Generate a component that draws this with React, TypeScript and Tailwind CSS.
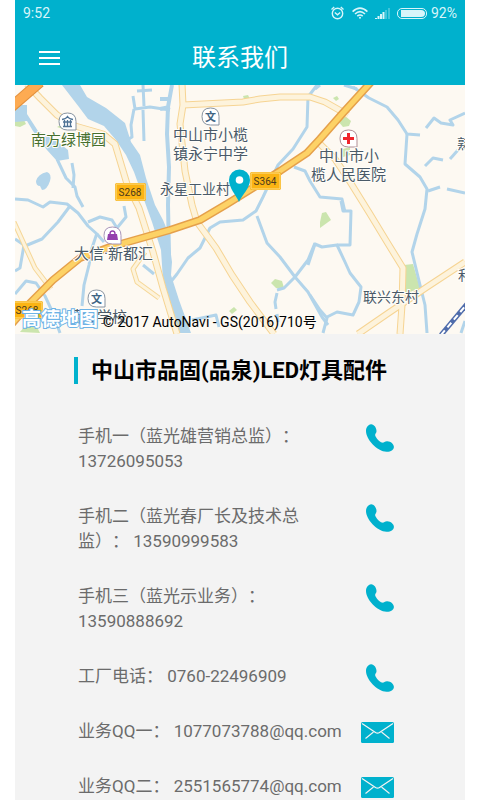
const contacts = [
  { label: "手机一（蓝光雄营销总监）：", value: "13726095053", type: "phone" },
  { label: "手机二（蓝光春厂长及技术总监）：", value: "13590999583", type: "phone" },
  { label: "手机三（蓝光示业务）：", value: "13590888692", type: "phone" },
  { label: "工厂电话：", value: "0760-22496909", type: "phone" },
  { label: "业务QQ一：", value: "1077073788@qq.com", type: "mail" },
  { label: "业务QQ二：", value: "2551565774@qq.com", type: "mail" },
]

const streams = [
  "M57 159 L66 178 L75 187 L77 196 L83 207",
  "M72 163 L74 175 L73 188",
  "M15 199 L28 200 L43 207 L50 202 L67 204 L78 213 L88 226 L97 234 L104 242",
  "M97 233 L92 248 L89 265 L84 285 L82 306",
  "M88 222 L100 217 L112 220 L117 228 L126 217 L124 206",
  "M15 239 L24 245 L20 268 L15 271",
  "M25 246 L42 239 L58 222 L70 206",
  "M15 294 L26 281 L36 283 L45 296 L52 311 L60 333",
  "M133 96 L135 109 L150 107 L170 110",
  "M134 109 L131 125 L132 137 L124 142",
  "M143 110 L144 141",
  "M143 85 L144 106 M137 91 L152 90",
  "M317 85 L308 97 L307 127 L293 149 L278 165 L263 197 L256 211 L243 220 L220 222 L210 228 L200 248 L188 258 L177 274 L169 284",
  "M257 216 L267 243 L280 257 L295 277 L308 292 L322 317 L328 325",
  "M315 243 L308 260 L295 277 L284 288 L277 290",
  "M277 293 L275 302 L276 309 M277 314 L278 322",
  "M310 295 L320 310 L327 318 L323 333",
  "M327 317 L337 312 L353 315 L359 302 L361 287 L350 273 L345 262 L337 245 L322 247 L315 244 L308 265",
  "M337 245 L350 245 L351 211 L343 211 L341 201",
  "M345 212 L342 199 L320 197 L310 181 L305 171 L294 167",
  "M353 87 L369 98 L387 107 L398 120 L407 134 L420 135",
  "M407 134 L405 164 L420 177 L427 189 L425 209 L417 234 L412 252 L420 285 L425 305 L427 333",
  "M428 191 L440 187",
  "M447 189 L465 193",
  "M425 166 L433 158 L443 160",
  "M426 128 L434 118 L441 123 L453 125 L450 120 L465 113",
  "M450 159 L458 150",
  "M143 265 L154 274",
  "M315 89 L320 85 M344 85 L357 89",
  "M192 320 L216 315 L219 327",
]

const lightRoads = [
  "M27 84 L40 98 L57 115 L75 126 L103 134 L115 144 L127 184 L139 208 L153 252 L163 288 L177 334",
  "M182 84 L183 105 L180 124 L185 171 L192 205 L197 222 L216 248 L232 275 L250 302 L274 334",
  "M183 105 L243 102 L260 99 L280 97 L310 97 L325 102 L348 115",
  "M318 142 L335 159 L347 177 L370 214 L387 242 L403 268 L402 305 L400 334",
  "M465 262 L427 287 L387 314 L358 334",
]

const thinRoads = [
  "M14 222 L35 268 L51 289",
  "M145 252 L133 269 L137 282 L159 298",
]

const highway =
  "M10 326 L30 303 L53 280 L80 258 L110 247 L170 230 L200 220 L227 204 L280 171 L307 153 L320 139 L342 114 L372 81"

const places = [
  { x: 31, y: 145, size: 15, text: "南方绿博园", color: "#47702e" },
  { x: 173, y: 140, size: 15, text: "中山市小榄", color: "#4a5a68" },
  { x: 173, y: 159, size: 15, text: "镇永宁中学", color: "#4a5a68" },
  { x: 319, y: 161, size: 15, text: "中山市小", color: "#4a5a68" },
  { x: 311, y: 180, size: 15, text: "榄人民医院", color: "#4a5a68" },
  { x: 160, y: 194, size: 14, text: "永星工业村", color: "#4a5a68" },
  { x: 74, y: 259, size: 15, text: "大信·新都汇", color: "#4a5a68" },
  { x: 67, y: 322, size: 15, text: "菊城学校", color: "#4a5a68" },
  { x: 363, y: 302, size: 14, text: "联兴东村", color: "#4a5a68" },
  { x: 457, y: 149, size: 14, text: "熟", color: "#4a5a68" },
  { x: 458, y: 280, size: 14, text: "和", color: "#4a5a68" },
]

const shields = [
  { x: 115, y: 183, text: "S268" },
  { x: 250, y: 172, text: "S364" },
  { x: 12, y: 301, text: "S268" },
]

function StatusIcons() {
  return (
    <div className="flex items-center text-[#d8f5fa]">
      <svg className="mr-2" width="13" height="14" viewBox="0 0 13 14" fill="none" stroke="currentColor">
        <circle cx="6.5" cy="7.5" r="5.2" strokeWidth="1.4" />
        <path d="M3.8 6.5 6.5 8.8 9.2 6.5M.5 3.4 3.2 1M12.5 3.4 9.8 1" strokeWidth="1.4" />
      </svg>
      <svg className="mr-[7px]" width="16" height="12" viewBox="0 0 16 12" fill="none" stroke="currentColor" strokeWidth="1.6">
        <path d="M.6 4.6Q8-2.4 15.4 4.6M3 7Q8 2.4 13 7M5.3 9.2Q8 6.8 10.7 9.2" />
        <circle cx="8" cy="10.8" r="1" fill="currentColor" stroke="none" />
      </svg>
      <svg className="mr-[6px]" width="16" height="11" viewBox="0 0 16 11" fill="currentColor">
        <path d="M0 10h2v1H0zM2.500 8h2v3h-2zM5 6h2v5H5zM7.500 4h2v7h-2z" />
        <path d="M10 2h2v9h-2zM13 0h2v11h-2z" opacity=".3" />
      </svg>
      <svg className="mr-1" width="30" height="11" viewBox="0 0 30 11">
        <rect x=".5" y=".5" width="29" height="10" rx="4.5" fill="none" stroke="currentColor" />
        <path d="M4 2H24Q28 2 28 5.5T24 9H4Z" fill="currentColor" />
      </svg>
      <span className="text-sm leading-4">92%</span>
    </div>
  )
}

function PhoneIcon() {
  return (
    <svg width="28" height="28" viewBox="0 0 28 28" fill="currentColor" aria-hidden="true">
      <path d="M0 7C0 3.500 2 .6 5 .2C8 0 10.800 4 10.500 7.500C10.300 9.500 8.800 9.800 9.200 11.500C10 14 13.500 17.800 16 18.600C17.800 19 18.500 17.400 21 17.200C24.500 17 28 20 27.900 23C27.800 26 24.500 28 20.500 27.800C16 27.500 10.500 24.500 6.500 20.200C2.600 16 0 11 0 7Z" />
    </svg>
  )
}

function MailIcon() {
  return (
    <svg width="33" height="21" viewBox="0 0 33 21" aria-hidden="true">
      <rect width="33" height="21" rx="1.5" fill="currentColor" />
      <path d="M1 1.5 14.5 10.5Q16.5 11.8 18.5 10.5L32 1.5" fill="none" stroke="#f3f3f3" strokeWidth="1.3" />
      <path d="M12.5 10 4.5 16.5M20.5 10 28.5 16.5" fill="none" stroke="#f3f3f3" strokeWidth="1.1" />
    </svg>
  )
}

function PoiBadge({ x, y, stroke = "#8793a0", children }: any) {
  return (
    <g transform={`translate(${x} ${y})`}>
      <path d="M8.5 0Q17 0 17 8.5V17H8.5Q0 17 0 8.5Q0 0 8.5 0Z" fill="#fff" stroke={stroke} />
      {children}
    </g>
  )
}

function MapView() {
  return (
    <section className="relative h-[249px] overflow-hidden bg-[#fdf9f2]" aria-label="地图">
      <svg
        className="block h-full w-full font-['Roboto','Noto_Sans_CJK_SC',sans-serif]"
        viewBox="15 85 450 249"
        preserveAspectRatio="xMidYMid slice"
      >
        {/* parks */}
        <g fill="#cbe5ae">
          <path d="M15 122 23 118 26 124 20 127 15 126Z" />
          <path d="M337 120 344 115 351 121 349 126 343 127Z" />
          <path d="M343 149 350 147 350 155 343 157Z" />
          <path d="M333 98 337 96 339 99 336 101Z" />
          <path d="M243 96 248 95 250 99 244 99Z" />
          <path d="M404 265 413 264 420 288 405 294Z" />
          <path d="M320 222 322 213 326 212 331 220 320 228Z" />
          <path d="M271 283 275 279 282 281 284 288 276 288Z" />
          <path d="M229 311 234 307 237 310 232 314Z" />
          <path d="M20 332 25 326 37 327 40 333Z" />
          <path d="M165 286 170 287 168 291Z" />
          <path d="M57 127 63 124 63 129Z" />
        </g>

        {/* water */}
        <path
          d="M62 85H80L87 97 106 108 125 123 131 142 140 155 146 178 155 205 163 220 168 232 172 262 171 275 179 300 191 333H180L171 305 163 280 161 250 152 222 143 197 134 172 126 155 116 140 104 126 88 119 79 107Z"
          fill="#b2d4ea"
        />
        <path d="M15 105 27 105 27 114 38 131 58 142 68 150 69 159 57 161 47 150 33 131 27 121 15 122Z" fill="#b2d4ea" />
        <path d="M36 181Q38 174 47 172Q52 174 50 181Q47 190 42 190L40 186Q36 186 36 181Z" fill="#b2d4ea" />
        <path d="M172 85 168 107 167 134 169 167 168 205 169 254M160 99 170 99M160 109 170 107" fill="none" stroke="#b2d4ea" strokeWidth="4" />
        {streams.map((d) => (
          <path key={d} d={d} fill="none" stroke="#b2d4ea" strokeWidth="3" strokeLinejoin="round" />
        ))}

        {/* roads */}
        {thinRoads.map((d) => (
          <g key={d} fill="none" strokeLinejoin="round">
            <path d={d} stroke="#f6d797" strokeWidth="5" />
            <path d={d} stroke="#fdf3dc" strokeWidth="3" />
          </g>
        ))}
        <g fill="none" strokeLinejoin="round">
          {lightRoads.map((d) => (
            <path key={d} d={d} stroke="#f6d493" strokeWidth="7" />
          ))}
          {lightRoads.map((d) => (
            <path key={d} d={d} stroke="#fdf3dc" strokeWidth="5" />
          ))}
        </g>
        <g fill="none" strokeLinejoin="round">
          <path d="M10 108 40 82" stroke="#e28f3c" strokeWidth="11" />
          <path d="M10 108 40 82" stroke="#fdab52" strokeWidth="9" />
          <path d={highway} stroke="#e5a04b" strokeWidth="8" />
          <path d={highway} stroke="#fdd266" strokeWidth="5" />
        </g>
        <path d="M441 335 467 304" stroke="#4f6cab" strokeWidth="5" />
        <path d="M441 335 467 304" stroke="#fff" strokeWidth="2" strokeDasharray="6 4" />
        <path d="M461 333 465 321" stroke="#b2d4ea" strokeWidth="3" />

        {/* road numbers */}
        {shields.map((s) => (
          <g key={`${s.x}-${s.y}`}>
            <rect x={s.x} y={s.y} width="31" height="18" rx="2" fill="#f5a800" />
            <rect x={s.x + 1} y={s.y + 1} width="29" height="16" rx="1" fill="#fbb414" stroke="#ffe08a" />
            <text x={s.x + 15} y={s.y + 13} textAnchor="middle" fontSize="10" fill="#4a3a1c">{s.text}</text>
          </g>
        ))}

        {/* points of interest */}
        <PoiBadge x={59} y={113}>
          <path d="M3 6.5Q7 6 8.5 3.5Q10 6 14 6.5M4 13.5H13M5.5 7V13M8.5 7V13M11.5 7V13M4 9H13" fill="none" stroke="#4f7396" strokeWidth="1.3" />
        </PoiBadge>
        <PoiBadge x={202} y={108}>
          <text x="8.5" y="13" textAnchor="middle" fontSize="11" fontWeight="700" fill="#3f6584">文</text>
        </PoiBadge>
        <PoiBadge x={88} y={290}>
          <text x="8.5" y="13" textAnchor="middle" fontSize="11" fontWeight="700" fill="#3f6584">文</text>
        </PoiBadge>
        <PoiBadge x={340} y={130} stroke="#b08f95">
          <path d="M8.5 3V14M3 8.5H14" stroke="#f0262d" strokeWidth="3" />
        </PoiBadge>
        <PoiBadge x={104} y={227} stroke="#a894b8">
          <path d="M4 7H13L14 13H3Z" fill="#9340ad" />
          <path d="M6 7Q6 4 8.5 4T11 7" fill="none" stroke="#9340ad" strokeWidth="1.4" />
        </PoiBadge>

        {places.map((p) => (
          <text
            key={p.text}
            x={p.x}
            y={p.y}
            fontSize={p.size}
            fill={p.color}
            stroke="#fffdf8"
            strokeWidth="2"
            paintOrder="stroke"
          >
            {p.text}
          </text>
        ))}
        <text x="22" y="326" fontSize="19" fontWeight="700" fill="#fff" stroke="#6db3e6" strokeWidth="2" paintOrder="stroke">
          高德地图
        </text>

        {/* current location */}
        <path d="M239 202C236 195 229 188 229 180A10.5 10.5 0 0 1 250 180C250 188 242 195 239 202Z" fill="#00b1cd" />
        <circle cx="239.5" cy="180" r="3.8" fill="#fff" />
      </svg>
      <p className="absolute bottom-0 left-[88px] text-sm leading-6 text-black">
        © 2017 AutoNavi - GS(2016)710号
      </p>
    </section>
  )
}

export default function App() {
  return (
    <div className="min-h-screen bg-white px-[15px] font-['Roboto','Noto_Sans_CJK_SC',sans-serif] [text-spacing-trim:space-all]">
      <div className="min-h-screen bg-[#f3f3f3]">
        <header className="bg-[#00b1cd] text-white">
          <div className="flex h-[26px] items-center justify-between px-2">
            <span className="text-sm leading-4 text-[#d8f5fa]">9:52</span>
            <StatusIcons />
          </div>
          <div className="grid h-[59px] grid-cols-[1fr_auto_1fr] items-center px-6 pt-1">
            <button type="button" aria-label="菜单" className="flex w-[21px] flex-col gap-1">
              <span className="h-[2px] bg-white" />
              <span className="h-[2px] bg-white" />
              <span className="h-[2px] bg-white" />
            </button>
            <h1 className="text-[24px] leading-8">联系我们</h1>
          </div>
        </header>

        <MapView />

        <main className="pr-[71px] pl-[59px] pt-[23px]">
          <h2 className="flex items-center gap-[13px] text-[22px] leading-[27px] font-bold whitespace-nowrap text-black">
            <span className="h-[27px] w-1 bg-[#00b1cd]" />
            中山市品固(品泉)LED灯具配件
          </h2>
          <ul className="mt-10 flex flex-col gap-[30px] pl-1">
            {contacts.map((c) => (
              <li key={c.value} className="flex items-start justify-between">
                <p className="max-w-[268px] text-[17px] leading-[25px] text-[#6b6b6b]">
                  {c.label} {c.value}
                </p>
                <a
                  href={c.type === "phone" ? `tel:${c.value}` : `mailto:${c.value}`}
                  aria-label={`${c.label}${c.value}`}
                  className={c.type === "phone" ? "h-[25px] text-[#00b1cd]" : "h-[25px] pt-[3px] text-[#00b1cd]"}
                >
                  {c.type === "phone" ? <PhoneIcon /> : <MailIcon />}
                </a>
              </li>
            ))}
          </ul>
        </main>
      </div>
    </div>
  )
}
